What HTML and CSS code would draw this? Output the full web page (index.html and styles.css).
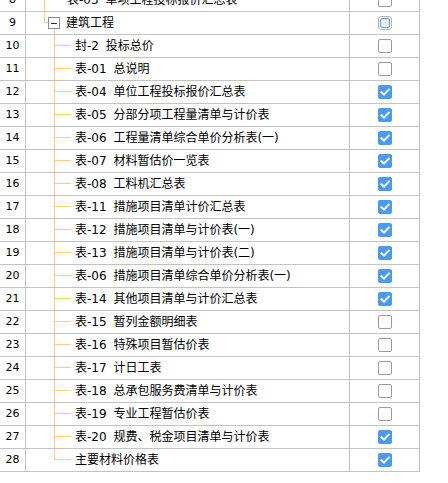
FILE: index.html
```html
<!DOCTYPE html>
<html lang="zh-CN">
<head>
<meta charset="utf-8">
<title>报表选择</title>
<link rel="stylesheet" href="styles.css">
</head>
<body>
<div class="grid">
  <div class="row"><div class="num">8</div><div class="name"><span class="indent1"></span><span class="branch1"></span><span class="label1">表-03 单项工程投标报价汇总表</span></div><div class="chk"><span class="box"></span></div></div>
  <div class="row"><div class="num">9</div><div class="name"><span class="indent1"></span><span class="elbow"></span><span class="toggle"><span class="tbox"><span class="minus"></span></span></span><span class="label0">建筑工程</span></div><div class="chk"><span class="box partial"><span class="inner"></span></span></div></div>
  <div class="row"><div class="num">10</div><div class="name"><span class="indent2"></span><span class="branch"></span><span class="label">封-2 投标总价</span></div><div class="chk"><span class="box"></span></div></div>
  <div class="row"><div class="num">11</div><div class="name"><span class="indent2"></span><span class="branch"></span><span class="label">表-01 总说明</span></div><div class="chk"><span class="box"></span></div></div>
  <div class="row"><div class="num">12</div><div class="name"><span class="indent2"></span><span class="branch"></span><span class="label">表-04 单位工程投标报价汇总表</span></div><div class="chk"><span class="box on"><svg viewBox="0 0 14 14" width="14" height="14"><path d="M3.5 7.2 L6 9.6 L10.8 4.6" /></svg></span></div></div>
  <div class="row"><div class="num">13</div><div class="name"><span class="indent2"></span><span class="branch"></span><span class="label">表-05 分部分项工程量清单与计价表</span></div><div class="chk"><span class="box on"><svg viewBox="0 0 14 14" width="14" height="14"><path d="M3.5 7.2 L6 9.6 L10.8 4.6" /></svg></span></div></div>
  <div class="row"><div class="num">14</div><div class="name"><span class="indent2"></span><span class="branch"></span><span class="label">表-06 工程量清单综合单价分析表(一)</span></div><div class="chk"><span class="box on"><svg viewBox="0 0 14 14" width="14" height="14"><path d="M3.5 7.2 L6 9.6 L10.8 4.6" /></svg></span></div></div>
  <div class="row"><div class="num">15</div><div class="name"><span class="indent2"></span><span class="branch"></span><span class="label">表-07 材料暂估价一览表</span></div><div class="chk"><span class="box on"><svg viewBox="0 0 14 14" width="14" height="14"><path d="M3.5 7.2 L6 9.6 L10.8 4.6" /></svg></span></div></div>
  <div class="row"><div class="num">16</div><div class="name"><span class="indent2"></span><span class="branch"></span><span class="label">表-08 工料机汇总表</span></div><div class="chk"><span class="box on"><svg viewBox="0 0 14 14" width="14" height="14"><path d="M3.5 7.2 L6 9.6 L10.8 4.6" /></svg></span></div></div>
  <div class="row"><div class="num">17</div><div class="name"><span class="indent2"></span><span class="branch"></span><span class="label">表-11 措施项目清单计价汇总表</span></div><div class="chk"><span class="box on"><svg viewBox="0 0 14 14" width="14" height="14"><path d="M3.5 7.2 L6 9.6 L10.8 4.6" /></svg></span></div></div>
  <div class="row"><div class="num">18</div><div class="name"><span class="indent2"></span><span class="branch"></span><span class="label">表-12 措施项目清单与计价表(一)</span></div><div class="chk"><span class="box on"><svg viewBox="0 0 14 14" width="14" height="14"><path d="M3.5 7.2 L6 9.6 L10.8 4.6" /></svg></span></div></div>
  <div class="row"><div class="num">19</div><div class="name"><span class="indent2"></span><span class="branch"></span><span class="label">表-13 措施项目清单与计价表(二)</span></div><div class="chk"><span class="box on"><svg viewBox="0 0 14 14" width="14" height="14"><path d="M3.5 7.2 L6 9.6 L10.8 4.6" /></svg></span></div></div>
  <div class="row"><div class="num">20</div><div class="name"><span class="indent2"></span><span class="branch"></span><span class="label">表-06 措施项目清单综合单价分析表(一)</span></div><div class="chk"><span class="box on"><svg viewBox="0 0 14 14" width="14" height="14"><path d="M3.5 7.2 L6 9.6 L10.8 4.6" /></svg></span></div></div>
  <div class="row"><div class="num">21</div><div class="name"><span class="indent2"></span><span class="branch"></span><span class="label">表-14 其他项目清单与计价汇总表</span></div><div class="chk"><span class="box on"><svg viewBox="0 0 14 14" width="14" height="14"><path d="M3.5 7.2 L6 9.6 L10.8 4.6" /></svg></span></div></div>
  <div class="row"><div class="num">22</div><div class="name"><span class="indent2"></span><span class="branch"></span><span class="label">表-15 暂列金额明细表</span></div><div class="chk"><span class="box"></span></div></div>
  <div class="row"><div class="num">23</div><div class="name"><span class="indent2"></span><span class="branch"></span><span class="label">表-16 特殊项目暂估价表</span></div><div class="chk"><span class="box"></span></div></div>
  <div class="row"><div class="num">24</div><div class="name"><span class="indent2"></span><span class="branch"></span><span class="label">表-17 计日工表</span></div><div class="chk"><span class="box"></span></div></div>
  <div class="row"><div class="num">25</div><div class="name"><span class="indent2"></span><span class="branch"></span><span class="label">表-18 总承包服务费清单与计价表</span></div><div class="chk"><span class="box"></span></div></div>
  <div class="row"><div class="num">26</div><div class="name"><span class="indent2"></span><span class="branch"></span><span class="label">表-19 专业工程暂估价表</span></div><div class="chk"><span class="box"></span></div></div>
  <div class="row"><div class="num">27</div><div class="name"><span class="indent2"></span><span class="branch"></span><span class="label">表-20 规费、税金项目清单与计价表</span></div><div class="chk"><span class="box on"><svg viewBox="0 0 14 14" width="14" height="14"><path d="M3.5 7.2 L6 9.6 L10.8 4.6" /></svg></span></div></div>
  <div class="row"><div class="num">28</div><div class="name"><span class="indent2"></span><span class="branch last"></span><span class="label">主要材料价格表</span></div><div class="chk"><span class="box on"><svg viewBox="0 0 14 14" width="14" height="14"><path d="M3.5 7.2 L6 9.6 L10.8 4.6" /></svg></span></div></div>
</div>
</body>
</html>
```

FILE: styles.css
```css
html, body {
  margin: 0;
  padding: 0;
  background: #ffffff;
  overflow: hidden;
}
body {
  font-family: "DejaVu Sans", "Noto Sans CJK SC", sans-serif;
  font-size: 12px;
  color: #000000;
}
.grid {
  width: 420px;
  margin-top: -11px;
}
.row {
  display: grid;
  grid-template-columns: 26px 324px 70px;
  height: 23px;
  box-sizing: border-box;
  border-bottom: 1px solid #c3c3c3;
}
.num, .name, .chk {
  box-sizing: border-box;
  border-right: 1px solid #c3c3c3;
  height: 22px;
}
.num {
  text-align: center;
  line-height: 22px;
  font-size: 11px;
}
.name {
  display: flex;
  align-items: stretch;
  line-height: 22px;
  white-space: nowrap;
  overflow: hidden;
}
.indent1 { width: 18px; flex: none; }
.indent2 { width: 28px; flex: none; }
.branch, .branch1, .elbow {
  flex: none;
  background:
    linear-gradient(#ffc97f, #ffc97f) 0 0 / 1px 100% no-repeat,
    linear-gradient(#ffc97f, #ffc97f) 0 10px / 100% 1px no-repeat;
}
.branch { width: 17px; }
.branch1 { width: 17px; }
.branch.last {
  background:
    linear-gradient(#ffc97f, #ffc97f) 0 0 / 1px 11px no-repeat,
    linear-gradient(#ffc97f, #ffc97f) 0 10px / 100% 1px no-repeat;
}
.elbow {
  width: 4px;
  background:
    linear-gradient(#ffc97f, #ffc97f) 0 0 / 1px 11px no-repeat,
    linear-gradient(#ffc97f, #ffc97f) 0 10px / 100% 1px no-repeat;
}
.toggle {
  flex: none;
  width: 12px;
  background: linear-gradient(#ffc97f, #ffc97f) 6px 17px / 1px 6px no-repeat;
}
.tbox {
  display: flex;
  align-items: center;
  justify-content: center;
  box-sizing: border-box;
  width: 12px;
  height: 12px;
  margin-top: 5px;
  border: 1px solid #8c8c8c;
  background: #ffffff;
}
.minus {
  display: block;
  width: 6px;
  height: 1px;
  background: #333333;
}
.label { margin-left: 4px; word-spacing: 3px; }
.label0 { margin-left: 6px; }
.label1 { margin-left: 6px; word-spacing: 3px; }
.chk {
  display: flex;
  justify-content: center;
  align-items: flex-start;
}
.box {
  display: block;
  box-sizing: border-box;
  width: 14px;
  height: 14px;
  margin-top: 4px;
  border: 1px solid #9b9b9b;
  border-radius: 2px;
  background: #ffffff;
}
.box.on {
  border-color: #4a99f3;
  background: #4a99f3;
}
.box svg {
  display: block;
  margin: -1px;
}
.box svg path {
  fill: none;
  stroke: #ffffff;
  stroke-width: 2;
  stroke-linecap: square;
  stroke-linejoin: miter;
}
.box.partial {
  border-color: #b4b4b4;
  border-radius: 3px;
  padding: 1px;
}
.inner {
  display: block;
  box-sizing: border-box;
  width: 10px;
  height: 10px;
  border: 1px solid #5b9ef0;
  border-radius: 2px;
  background: #e9eef5;
}
```
